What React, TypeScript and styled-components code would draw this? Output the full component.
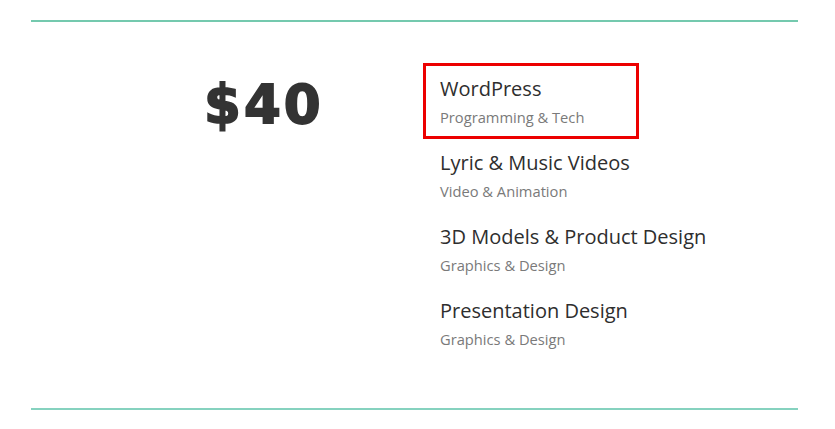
import React from "react";
import styled, { createGlobalStyle } from "styled-components";

const Global = createGlobalStyle`
  html, body { margin: 0; padding: 0; background: #ffffff; }
  body { font-family: "Open Sans", "Liberation Sans", sans-serif; }
`;

const Page = styled.div`
  padding: 20px 37px 0 31px;
`;

const Section = styled.section`
  border-top: 2px solid #74c9ae;
  border-bottom: 2px solid #86d2bf;
  height: 390px;
  box-sizing: border-box;
  display: flex;
  align-items: flex-start;
`;

const PriceCol = styled.div`
  width: 409px;
  padding-left: 173px;
  box-sizing: border-box;
  padding-top: 56px;
`;

const Price = styled.div`
  font-family: "DejaVu Sans", sans-serif;
  font-weight: 700;
  font-size: 53px;
  line-height: 1;
  color: #333333;
  letter-spacing: 3px;
  -webkit-text-stroke: 1.8px #333333;
`;

const List = styled.ul`
  list-style: none;
  margin: 0;
  padding: 54px 0 0 0;
  display: flex;
  flex-direction: column;
  gap: 20px;
`;

const Item = styled.li<{ $highlight?: boolean }>`
  position: relative;
  &::before {
    content: "";
    display: ${(p) => (p.$highlight ? "block" : "none")};
    position: absolute;
    left: -17px;
    top: -13px;
    width: 216px;
    height: 76px;
    border: 3px solid #ec0000;
    box-sizing: border-box;
  }
`;

const Title = styled.div`
  font-family: "Open Sans", sans-serif;
  font-size: 20px;
  line-height: 26px;
  color: #2e2e2e;
`;

const Sub = styled.div`
  font-family: "Open Sans", sans-serif;
  font-size: 14.7px;
  line-height: 26px;
  margin-top: 2px;
  color: #7a7a7a;
`;

const items = [
  { title: "WordPress", sub: "Programming & Tech", hl: true },
  { title: "Lyric & Music Videos", sub: "Video & Animation" },
  { title: "3D Models & Product Design", sub: "Graphics & Design" },
  { title: "Presentation Design", sub: "Graphics & Design" },
];

export default function App() {
  return (
    <>
      <Global />
      <Page>
        <Section>
          <PriceCol>
            <Price>$40</Price>
          </PriceCol>
          <List>
            {items.map((it) => (
              <Item key={it.title} $highlight={it.hl}>
                <Title>{it.title}</Title>
                <Sub>{it.sub}</Sub>
              </Item>
            ))}
          </List>
        </Section>
      </Page>
    </>
  );
}
